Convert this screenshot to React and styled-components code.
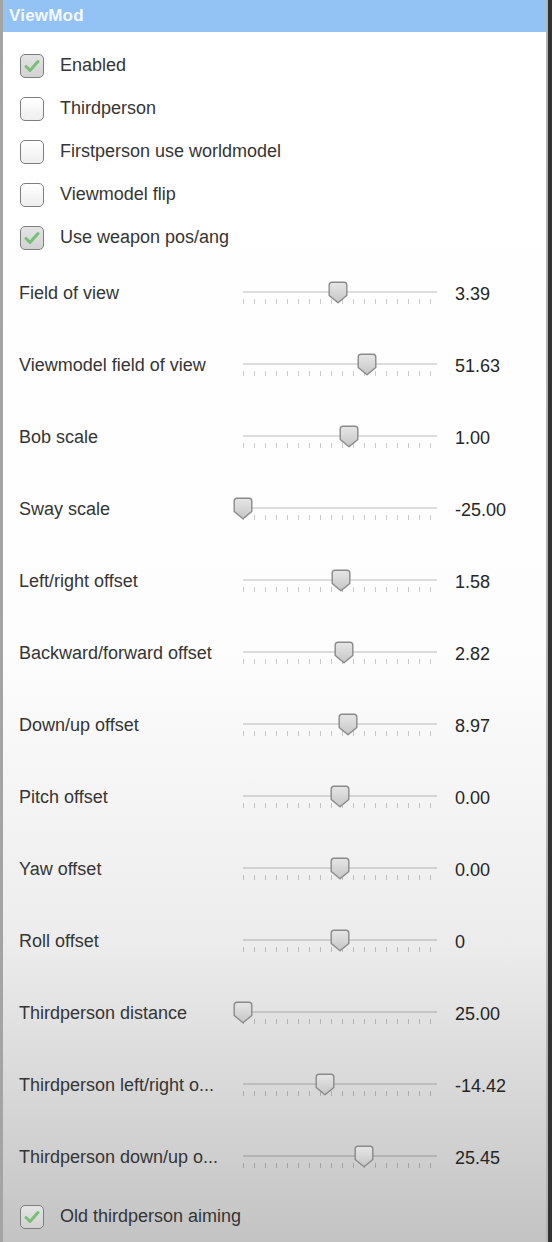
import React from 'react'
import styled, { createGlobalStyle } from 'styled-components'

const Global = createGlobalStyle`
  html, body {
    margin: 0;
    padding: 0;
    background: #2e2e2e;
  }
`

const Frame = styled.div`
  display: flex;
  width: 552px;
  height: 1242px;
  overflow: hidden;
  background: #333;
`

const Panel = styled.div`
  flex: 1;
  display: flex;
  flex-direction: column;
  border-left: 3px solid #a4a4a4;
  border-right: 2px solid #b4b4b4;
  margin-right: 4px;
  background: linear-gradient(to bottom, #ffffff 0%, #fdfdfd 52%, #ececec 76%, #c3c3c3 100%);
  font-family: "Liberation Sans", Arial, sans-serif;
  color: #353535;
`

const TitleBar = styled.div`
  height: 32px;
  background: #93c2f4;
  display: flex;
  align-items: center;
  padding-left: 6px;
  color: #f4f8ff;
  font-weight: bold;
  font-size: 17px;
  letter-spacing: 0.2px;
`

const Body = styled.div`
  display: flex;
  flex-direction: column;
  padding-top: 12px;
`

const CheckRow = styled.div`
  height: 43px;
  display: flex;
  align-items: center;
  gap: 16px;
  padding-left: 17px;
  font-size: 18px;
`

const Box = styled.div`
  width: 22px;
  height: 22px;
  border: 1.5px solid #7e7e7e;
  border-radius: 5px;
  background: ${p => p.$checked
    ? 'linear-gradient(#e4e4e4, #d2d2d2)'
    : 'linear-gradient(#ffffff, #eeeeee)'};
  display: flex;
  align-items: center;
  justify-content: center;
`

const SliderRow = styled.div`
  height: 72px;
  display: grid;
  grid-template-columns: 214px 214px 1fr;
  align-items: center;
  padding-left: 16px;
  font-size: 18px;
`

const Label = styled.div`
  white-space: nowrap;
  margin-top: -4px;
`

const Slider = styled.div`
  position: relative;
  height: 24px;
  margin-top: -2px;
`

const Track = styled.div`
  margin: 9px 10px 0;
  height: 2px;
  background: rgba(0, 0, 0, 0.13);
`

const Ticks = styled.div`
  margin: 6px 10px 0;
  height: 5px;
  background: repeating-linear-gradient(
    to right,
    rgba(0, 0, 0, 0.2) 0px,
    rgba(0, 0, 0, 0.2) 1px,
    transparent 1px,
    transparent 11px
  );
`

const Thumb = styled.svg`
  position: absolute;
  top: -1px;
  width: 20px;
  height: 23px;
  transform: translateX(-50%);
`

const Value = styled.div`
  padding-left: 8px;
  color: #262626;
  margin-top: -2px;
`

const Check = () => (
  <svg width="16" height="14" viewBox="0 0 16 14">
    <path d="M2 7.5 L6 11.5 L14 2.5" fill="none" stroke="#78bf78" strokeWidth="3" strokeLinecap="round" strokeLinejoin="round" />
  </svg>
)

const CheckItem = ({ checked, children }) => (
  <CheckRow>
    <Box $checked={checked}>{checked && <Check />}</Box>
    <span>{children}</span>
  </CheckRow>
)

const SliderItem = ({ label, value, pos }) => (
  <SliderRow>
    <Label>{label}</Label>
    <Slider>
      <Track />
      <Ticks />
      <Thumb viewBox="0 0 20 23" style={{ left: `calc(10px + (100% - 20px) * ${pos})` }}>
        <defs>
          <linearGradient id="tg" x1="0" y1="0" x2="0" y2="1">
            <stop offset="0" stopColor="#e6e6e6" />
            <stop offset="1" stopColor="#c6c6c6" />
          </linearGradient>
        </defs>
        <path d="M4 1.2 H16 Q18.8 1.2 18.8 4 V14.5 L10 21.8 L1.2 14.5 V4 Q1.2 1.2 4 1.2 Z" fill="url(#tg)" stroke="#8a8a8a" strokeWidth="1.4" strokeLinejoin="round" />
      </Thumb>
    </Slider>
    <Value>{value}</Value>
  </SliderRow>
)

const sliders = [
  { label: 'Field of view', value: '3.39', pos: 0.49 },
  { label: 'Viewmodel field of view', value: '51.63', pos: 0.64 },
  { label: 'Bob scale', value: '1.00', pos: 0.546 },
  { label: 'Sway scale', value: '-25.00', pos: 0 },
  { label: 'Left/right offset', value: '1.58', pos: 0.505 },
  { label: 'Backward/forward offset', value: '2.82', pos: 0.52 },
  { label: 'Down/up offset', value: '8.97', pos: 0.541 },
  { label: 'Pitch offset', value: '0.00', pos: 0.5 },
  { label: 'Yaw offset', value: '0.00', pos: 0.5 },
  { label: 'Roll offset', value: '0', pos: 0.5 },
  { label: 'Thirdperson distance', value: '25.00', pos: 0 },
  { label: 'Thirdperson left/right o...', value: '-14.42', pos: 0.423 },
  { label: 'Thirdperson down/up o...', value: '25.45', pos: 0.624 },
]

const App = () => {
  return (
    <Frame>
      <Global />
      <Panel>
        <TitleBar>ViewMod</TitleBar>
        <Body>
          <CheckItem checked>Enabled</CheckItem>
          <CheckItem>Thirdperson</CheckItem>
          <CheckItem>Firstperson use worldmodel</CheckItem>
          <CheckItem>Viewmodel flip</CheckItem>
          <CheckItem checked>Use weapon pos/ang</CheckItem>

          {sliders.map(s => (
            <SliderItem key={s.label} {...s} />
          ))}

          <CheckItem checked>Old thirdperson aiming</CheckItem>
        </Body>
      </Panel>
    </Frame>
  )
}

export default App
